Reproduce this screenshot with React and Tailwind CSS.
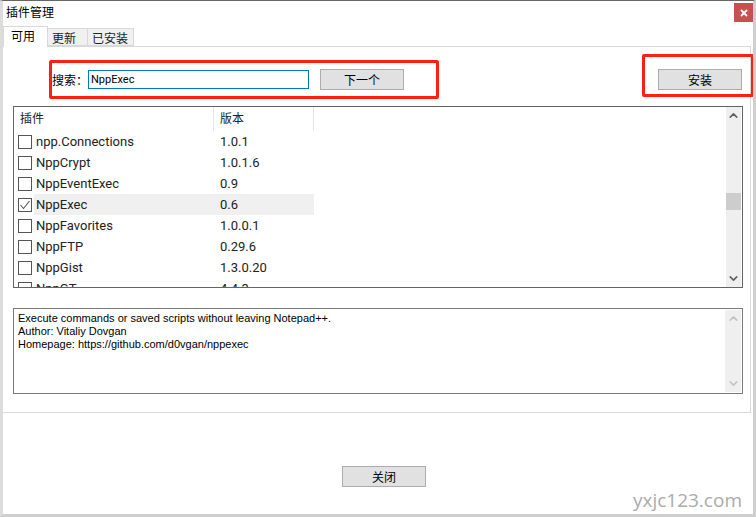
import { ChevronUp, ChevronDown } from 'lucide-react';

const uiFont = 'font-["Roboto","Noto_Sans_CJK_SC",sans-serif]';
const cjkFont = 'font-["Noto_Sans_CJK_SC",sans-serif]';

const plugins = [
  { name: 'npp.Connections', version: '1.0.1' },
  { name: 'NppCrypt', version: '1.0.1.6' },
  { name: 'NppEventExec', version: '0.9' },
  { name: 'NppExec', version: '0.6', checked: true },
  { name: 'NppFavorites', version: '1.0.0.1' },
  { name: 'NppFTP', version: '0.29.6' },
  { name: 'NppGist', version: '1.3.0.20' },
  { name: 'NppGT', version: '4.4.3' },
];

const DialogButton = ({ label }) => (
  <button className={`w-[84px] h-[21px] bg-[#e1e1e1] border border-[#adadad] text-[12px] leading-none text-black ${cjkFont}`}>
    {label}
  </button>
);

const Tab = ({ label, active, width }) => (
  <div
    className={
      active
        ? `h-[21px] -mb-px pl-[7px] bg-white border border-b-0 border-[#d9d9d9] text-[12px] leading-[17px] text-black relative ${width} ${cjkFont}`
        : `h-[18px] pl-[4px] bg-[#f0f0f0] border border-l-0 border-[#d9d9d9] text-[12px] leading-[18px] text-[#222] ${width} ${cjkFont}`
    }
  >
    {label}
  </div>
);

const PluginRow = ({ plugin }) => (
  <div className="flex items-center h-[21px] shrink-0 text-[13px] text-[#222]">
    <div className="w-[20px] flex justify-center shrink-0 pl-[1px]">
      <div className="w-[14px] h-[14px] border border-[#555] flex items-center justify-center bg-white">
        {plugin.checked && (
          <svg width="12" height="12" viewBox="0 0 12 12" fill="none" stroke="#555" strokeWidth="1.1">
            <path d="M1.5 6 L4.5 9.5 L10.5 2" />
          </svg>
        )}
      </div>
    </div>
    <div className={`flex items-center h-full w-[280px] ${plugin.checked ? 'bg-[#f0f0f0]' : ''}`}>
      <div className="w-[186px] pl-[2px]">{plugin.name}</div>
      <div>{plugin.version}</div>
    </div>
  </div>
);

// plugin admin dialog
export default function App() {
  return (
    <div className={`relative w-[756px] h-[517px] bg-white overflow-hidden flex flex-col border-t border-t-[#666] border-l-[3px] border-l-[#dcdcdc] border-r-[3px] border-r-[#cfcfcf] border-b-[3px] border-b-[#cfcfcf] ${uiFont}`}>
      {/* title bar */}
      <div className="flex items-start justify-between h-[24px] shrink-0">
        <div className={`pl-[3px] pt-[2px] text-[12px] leading-[17px] text-black ${cjkFont}`}>插件管理</div>
        <div className="w-[19px] h-[19px] mt-[2px] bg-[#c75050] flex items-center justify-center text-white">
          <svg width="8" height="8" viewBox="0 0 8 8" stroke="white" strokeWidth="1.8">
            <path d="M1 1 L7 7 M7 1 L1 7" />
          </svg>
        </div>
      </div>

      {/* tabs */}
      <div className="flex items-end h-[21px] shrink-0">
        <Tab label="可用" width="w-[45px]" active />
        <Tab label="更新" width="w-[40px]" />
        <Tab label="已安装" width="w-[46px]" />
      </div>

      {/* tab panel */}
      <div className="w-[748px] h-[367px] shrink-0 border border-l-0 border-[#d9d9d9] pl-[10px] flex flex-col">
        <div className="flex items-center h-[59px] shrink-0 pt-[6px]">
          <div className={`w-[75px] pl-[39px] text-[12px] text-black whitespace-nowrap ${cjkFont}`}>搜索：</div>
          <input
            readOnly
            value="NppExec"
            className="w-[221px] h-[19px] border border-[#0078d7] px-[2px] text-[11px] text-black outline-none"
          />
          <div className="ml-[11px]"><DialogButton label="下一个" /></div>
          <div className="ml-auto mr-[8px]"><DialogButton label="安装" /></div>
        </div>

        {/* plugin list */}
        <div className="w-[730px] h-[182px] shrink-0 border border-[#646464] flex">
          <div className="flex-1 flex flex-col overflow-hidden">
            <div className={`flex h-[24px] shrink-0 text-[12px] text-[#222] ${cjkFont}`}>
              <div className="w-[200px] pl-[6px] pt-[2px] border-r border-[#e5e5e5]">插件</div>
              <div className="w-[100px] pl-[6px] pt-[2px] border-r border-[#e5e5e5]">版本</div>
            </div>
            {plugins.map((p) => (
              <PluginRow key={p.name} plugin={p} />
            ))}
          </div>
          <div className="w-[15px] mr-px shrink-0 bg-[#efefef] flex flex-col items-center text-[#606060]">
            <div className="h-[86px] pt-[2px]"><ChevronUp size={13} strokeWidth={3} /></div>
            <div className="w-full h-[17px] bg-[#cdcdcd]" />
            <div className="flex-1 flex items-end pb-[2px]"><ChevronDown size={13} strokeWidth={3} /></div>
          </div>
        </div>

        {/* description */}
        <div className="mt-[20px] w-[730px] h-[86px] shrink-0 border border-[#7a7a7a] flex">
          <div className='flex-1 pl-[4px] pt-[3px] text-[11px] leading-[13px] text-black font-["Liberation_Sans",sans-serif]'>
            <div>Execute commands or saved scripts without leaving Notepad++.</div>
            <div>Author: Vitaliy Dovgan</div>
            <div>Homepage: https://github.com/d0vgan/nppexec</div>
          </div>
          <div className="w-[16px] mr-px my-px shrink-0 bg-[#efefef] flex flex-col items-center justify-between py-[2px] text-[#c4c4c4]">
            <ChevronUp size={13} strokeWidth={3} />
            <ChevronDown size={13} strokeWidth={3} />
          </div>
        </div>
      </div>

      {/* footer */}
      <div className="flex-1 flex justify-center pt-[53px] pl-[12px]">
        <DialogButton label="关闭" />
      </div>

      {/* watermark */}
      <div className='absolute right-[11px] bottom-[2px] text-[19px] leading-[24px] text-[#ababab] font-["Open_Sans",sans-serif]'>yxjc123.com</div>

      {/* red highlight frames */}
      <div className="absolute left-[46px] top-[59px] w-[390px] h-[39px] border-[3px] border-[#ff2015] rounded-[2px]" />
      <div className="absolute left-[639px] top-[53px] w-[112px] h-[43px] border-[3px] border-[#ff2015] rounded-[2px]" />
    </div>
  );
}
